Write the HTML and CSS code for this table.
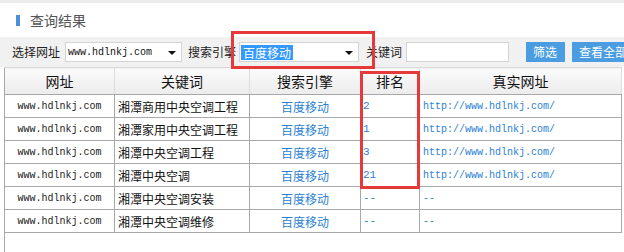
FILE: index.html
```html
<!DOCTYPE html>
<html lang="zh">
<head>
<meta charset="utf-8">
<title>查询结果</title>
<link rel="stylesheet" href="styles.css">
</head>
<body>
<div class="page">
  <div class="topline"></div>
  <div class="title"><span class="title-bar"></span><span class="title-text">查询结果</span></div>
  <div class="filter">
    <span class="lbl">选择网址</span>
    <div class="sel sel-site"><span class="mono">www.hdlnkj.com</span><span class="arrow"></span></div>
    <span class="lbl lbl-engine">搜索引擎</span>
    <div class="sel sel-engine"><span class="hl">百度移动</span><span class="arrow"></span></div>
    <span class="lbl lbl-kw">关键词</span>
    <div class="input"></div>
    <span class="btn btn-filter">筛选</span>
    <span class="btn btn-all">查看全部</span>
  </div>
  <div class="table-wrap">
    <table class="result">
      <colgroup>
        <col class="c1"><col class="c2"><col class="c3"><col class="c4"><col class="c5">
      </colgroup>
      <thead>
        <tr><th>网址</th><th>关键词</th><th>搜索引擎</th><th>排名</th><th>真实网址</th></tr>
      </thead>
      <tbody>
        <tr><td class="site mono">www.hdlnkj.com</td><td class="kw">湘潭商用中央空调工程</td><td class="eng">百度移动</td><td class="rank mono">2</td><td class="url mono">http://www.hdlnkj.com/</td></tr>
        <tr><td class="site mono">www.hdlnkj.com</td><td class="kw">湘潭家用中央空调工程</td><td class="eng">百度移动</td><td class="rank mono">1</td><td class="url mono">http://www.hdlnkj.com/</td></tr>
        <tr><td class="site mono">www.hdlnkj.com</td><td class="kw">湘潭中央空调工程</td><td class="eng">百度移动</td><td class="rank mono">3</td><td class="url mono">http://www.hdlnkj.com/</td></tr>
        <tr><td class="site mono">www.hdlnkj.com</td><td class="kw">湘潭中央空调</td><td class="eng">百度移动</td><td class="rank mono">21</td><td class="url mono">http://www.hdlnkj.com/</td></tr>
        <tr><td class="site mono">www.hdlnkj.com</td><td class="kw">湘潭中央空调安装</td><td class="eng">百度移动</td><td class="rank mono">--</td><td class="url mono">--</td></tr>
        <tr><td class="site mono">www.hdlnkj.com</td><td class="kw">湘潭中央空调维修</td><td class="eng">百度移动</td><td class="rank mono">--</td><td class="url mono">--</td></tr>
      </tbody>
    </table>
  </div>
  <div class="mark mark-engine"></div>
  <div class="mark mark-rank"></div>
</div>
</body>
</html>
```
FILE: styles.css
```css
html, body {
  margin: 0;
  padding: 0;
  background: #fff;
}
.page {
  position: relative;
  width: 624px;
  height: 252px;
  overflow: hidden;
  font-family: "Noto Sans CJK SC", "Liberation Sans", sans-serif;
  color: #222;
}
.mono {
  font-family: "Liberation Mono", "DejaVu Sans Mono", monospace;
  font-size: 10px;
}
.topline {
  height: 3px;
  background: #ececec;
}
.title {
  height: 34px;
  display: flex;
  align-items: center;
  padding-left: 16px;
}
.title-bar {
  width: 4px;
  height: 11px;
  background: #4a90d9;
  margin-right: 10px;
}
.title-text {
  font-size: 14px;
  color: #555;
  line-height: 1;
}
.filter {
  height: 30px;
  background: #f1f1f1;
  display: flex;
  align-items: center;
  padding-left: 12px;
  white-space: nowrap;
}
.lbl {
  font-size: 12px;
  line-height: 1;
  color: #222;
}
.sel {
  position: relative;
  box-sizing: border-box;
  height: 20px;
  background: #fff;
  border: 1px solid #d4d4d4;
  display: flex;
  align-items: center;
  flex-shrink: 0;
}
.sel-site {
  width: 117px;
  margin-left: 5px;
  padding-left: 2px;
}
.sel-site .mono { color: #111; }
.lbl-engine { margin-left: 6px; }
.sel-engine {
  width: 120px;
  margin-left: 3px;
  padding-left: 1px;
}
.hl {
  background: #3399ff;
  color: #fff;
  font-size: 12px;
  line-height: 15px;
  padding: 0 2px;
}
.arrow {
  position: absolute;
  right: 5px;
  top: 8px;
  width: 0;
  height: 0;
  border-left: 4px solid transparent;
  border-right: 4px solid transparent;
  border-top: 4px solid #111;
}
.lbl-kw { margin-left: 7px; }
.input {
  box-sizing: border-box;
  width: 103px;
  height: 20px;
  margin-left: 4px;
  background: #fff;
  border: 1px solid #d4d4d4;
  flex-shrink: 0;
}
.btn {
  height: 20px;
  line-height: 20px;
  background: #4a9de0;
  color: #fff;
  font-size: 12px;
  padding: 0 7px;
  flex-shrink: 0;
}
.btn-filter { margin-left: 17px; width: 25px; }
.btn-all { margin-left: 7px; }
.table-wrap {
  margin-left: 4px;
  width: 617px;
  height: 185px;
  border-left: 1px solid #a8a8a8;
  box-sizing: border-box;
}
.result {
  width: 617px;
  margin-left: -1px;
  border-collapse: collapse;
  table-layout: fixed;
}
.c1 { width: 110px; }
.c2 { width: 135px; }
.c3 { width: 111px; }
.c4 { width: 59px; }
.c5 { width: 202px; }
.result th {
  height: 26px;
  padding: 0;
  font-size: 14px;
  font-weight: normal;
  color: #111;
  text-align: center;
  background: linear-gradient(#fbfbfb, #ececec);
  border-left: 1px solid #dcdcdc;
  border-right: 1px solid #dcdcdc;
  border-top: 1px solid #d8d8d8;
  border-bottom: 1px solid #a8a8a8;
}
.result th:first-child { border-left: 1px solid #a8a8a8; }
.result td {
  height: 22px;
  padding: 0;
  border: 1px solid #a8a8a8;
  font-size: 12px;
  white-space: nowrap;
  overflow: hidden;
}
.result td.mono { font-size: 10px; }
.result td.site { text-align: center; color: #222; }
.result td.kw { padding-left: 3px; color: #111; }
.result td.eng { text-align: center; color: #2a7fd4; }
.result td.rank { padding-left: 2px; color: #2a7fd4; font-size: 11px; }
.result td.url { padding-left: 3px; color: #2a7fd4; }
.mark {
  position: absolute;
  border: 3px solid #e63939;
  box-sizing: border-box;
}
.mark-engine {
  left: 231px;
  top: 31px;
  width: 144px;
  height: 38px;
}
.mark-rank {
  left: 360px;
  top: 71px;
  width: 60px;
  height: 118px;
}
```
